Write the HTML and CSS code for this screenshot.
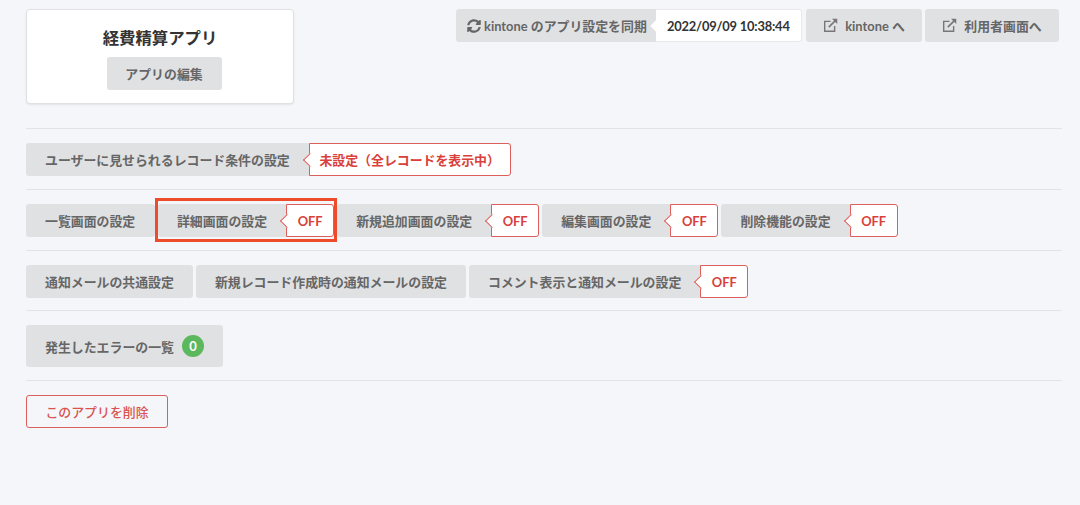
FILE: index.html
```html
<!DOCTYPE html>
<html lang="ja">
<head>
    <meta charset="UTF-8">
    <meta name="viewport" content="width=device-width, initial-scale=1.0">
    <title>経費精算アプリ</title>
    <link rel="stylesheet" href="styles.css">
</head>
<body>
    <div class="container">
        <div class="top">
            <div class="app-card">
                <div class="app-name">経費精算アプリ</div>
                <a class="btn">アプリの編集</a>
            </div>
            <div class="top-actions">
                <a class="btn btn-sync">
                    <svg class="icon" viewBox="0 0 512 512" aria-hidden="true"><path fill="currentColor" d="M370.72 133.28C339.458 104.008 298.888 87.962 255.848 88c-77.458.068-144.328 53.178-162.791 126.85-1.344 5.363-6.122 9.15-11.651 9.15H24.103c-7.498 0-13.194-6.807-11.807-14.176C33.933 94.924 134.813 8 256 8c66.448 0 126.791 26.136 171.315 68.685L463.03 40.97C478.149 25.851 504 36.559 504 57.941V192c0 13.255-10.745 24-24 24H345.941c-21.382 0-32.09-25.851-16.971-40.971l41.75-41.749zM32 296h134.059c21.382 0 32.09 25.851 16.971 40.971l-41.75 41.75c31.262 29.273 71.835 45.319 114.876 45.28 77.418-.07 144.315-53.144 162.787-126.849 1.344-5.363 6.122-9.15 11.651-9.15h57.304c7.498 0 13.194 6.807 11.807 14.176C478.067 417.076 377.187 504 256 504c-66.448 0-126.791-26.136-171.315-68.685L48.97 471.03C33.851 486.149 8 475.441 8 454.059V320c0-13.255 10.745-24 24-24z"/></svg>
                    kintone のアプリ設定を同期
                </a>
                <span class="sync-date">2022/09/09 10:38:44</span>
                <a class="btn btn-link">
                    <svg class="icon icon-link" viewBox="0 0 16 16" aria-hidden="true"><path d="M8 3.6H1.8v10.6h10.6V8.4" fill="none" stroke="currentColor" stroke-width="1.5"/><path d="M6.2 9.8 13.2 2.8" fill="none" stroke="currentColor" stroke-width="1.7"/><path d="M9.6 .8h5.6v5.6z" fill="currentColor"/></svg>
                    kintone へ
                </a>
                <a class="btn btn-link">
                    <svg class="icon icon-link" viewBox="0 0 16 16" aria-hidden="true"><path d="M8 3.6H1.8v10.6h10.6V8.4" fill="none" stroke="currentColor" stroke-width="1.5"/><path d="M6.2 9.8 13.2 2.8" fill="none" stroke="currentColor" stroke-width="1.7"/><path d="M9.6 .8h5.6v5.6z" fill="currentColor"/></svg>
                    利用者画面へ
                </a>
            </div>
        </div>

        <div class="row">
            <div class="item"><a class="btn">ユーザーに見せられるレコード条件の設定</a><span class="tag tag-wide">未設定（全レコードを表示中）</span></div>
        </div>

        <div class="row row-screens">
            <div class="item"><a class="btn">一覧画面の設定</a></div>
            <div class="item item-marked"><a class="btn">詳細画面の設定</a><span class="tag">OFF</span></div>
            <div class="item"><a class="btn">新規追加画面の設定</a><span class="tag">OFF</span></div>
            <div class="item"><a class="btn">編集画面の設定</a><span class="tag">OFF</span></div>
            <div class="item"><a class="btn">削除機能の設定</a><span class="tag">OFF</span></div>
        </div>

        <div class="row row-notify">
            <div class="item"><a class="btn">通知メールの共通設定</a></div>
            <div class="item"><a class="btn">新規レコード作成時の通知メールの設定</a></div>
            <div class="item"><a class="btn">コメント表示と通知メールの設定</a><span class="tag">OFF</span></div>
        </div>

        <div class="row">
            <a class="btn btn-errors">発生したエラーの一覧<span class="count">0</span></a>
        </div>

        <div class="row">
            <a class="btn btn-delete">このアプリを削除</a>
        </div>
    </div>
</body>
</html>
```

FILE: styles.css
```css
* {
    box-sizing: border-box;
}
body {
    margin: 0;
    background-color: #f5f6fa;
    color: #333;
    font-family: "Lato", "Noto Sans CJK JP", sans-serif;
    font-size: 12.9px;
}
.container {
    width: 1036px;
    margin-left: 26px;
    padding-top: 9px;
}
.top {
    display: flex;
    justify-content: space-between;
    align-items: flex-start;
    height: 119px;
}
.app-card {
    width: 268px;
    height: 95px;
    padding-top: 17px;
    background-color: #fff;
    border: 1px solid #dfe1e4;
    border-radius: 4px;
    box-shadow: 0 1px 2px rgba(0, 0, 0, 0.08);
    text-align: center;
}
.app-name {
    height: 30px;
    font-size: 16.4px;
    font-weight: bold;
    line-height: 22px;
    color: #333;
}
.app-card .btn {
    width: 115px;
    margin-left: 8px;
    padding: 0;
}
.top-actions {
    display: flex;
    align-items: stretch;
    margin-right: 3px;
}
.btn {
    display: inline-flex;
    align-items: center;
    justify-content: center;
    height: 33px;
    padding: 0 19px;
    background-color: #e0e1e3;
    border-radius: 3px;
    color: #666;
    font-weight: bold;
    white-space: nowrap;
}
.icon {
    width: 14px;
    height: 14px;
    flex: none;
}
.icon-link {
    width: 15px;
    height: 15px;
    color: #777;
}
.btn-sync {
    gap: 3px;
    justify-content: flex-start;
    width: 200px;
    padding: 0 0 0 11px;
    border-radius: 3px 0 0 3px;
}
.sync-date {
    position: relative;
    display: flex;
    align-items: center;
    width: 146px;
    padding-left: 11px;
    background-color: #fff;
    border: 1px solid #e8e9eb;
    border-left: none;
    border-radius: 0 3px 3px 0;
    color: #333;
    font-weight: bold;
    letter-spacing: -0.2px;
    white-space: nowrap;
}
.sync-date::before {
    content: "";
    position: absolute;
    left: -4px;
    top: 12px;
    width: 8px;
    height: 8px;
    background-color: #fff;
    transform: rotate(45deg);
}
.btn-link {
    gap: 7px;
    margin-left: 4px;
    padding: 0;
    width: 116px;
}
.btn-link + .btn-link {
    margin-left: 3px;
    width: 134px;
}
.row {
    display: flex;
    align-items: flex-start;
    gap: 3px;
    padding: 14px 0 13px;
    border-top: 1px solid #e2e3e6;
}
.row-notify {
    padding-bottom: 12px;
}
.row-screens .item:first-child .btn {
    padding-right: 19.7px;
}
.item {
    position: relative;
    display: flex;
}
.item-marked::after {
    content: "";
    position: absolute;
    inset: -6px -3px -5px -3px;
    border: 3px solid #ee4b2b;
    pointer-events: none;
}
.tag {
    position: relative;
    display: flex;
    align-items: center;
    justify-content: center;
    width: 48px;
    height: 33px;
    background-color: #fff;
    border: 1px solid #dd5f5b;
    border-radius: 0 3px 3px 0;
    color: #d9403a;
    font-weight: bold;
}
.tag::before {
    content: "";
    position: absolute;
    left: -5px;
    top: 11px;
    width: 9px;
    height: 9px;
    background-color: #fff;
    border-left: 1px solid #dd5f5b;
    border-bottom: 1px solid #dd5f5b;
    transform: rotate(45deg);
}
.item .btn:has(+ .tag) {
    border-radius: 3px 0 0 3px;
}
.tag-wide {
    width: 202px;
}
.btn-errors {
    height: 42px;
    width: 197px;
    gap: 8px;
    padding: 0;
}
.count {
    display: flex;
    align-items: center;
    justify-content: center;
    width: 22px;
    height: 22px;
    background-color: #5cb85c;
    border-radius: 50%;
    color: #fff;
    font-size: 13px;
}
.btn-delete {
    width: 142px;
    padding: 0;
    background-color: transparent;
    border: 1px solid #dd5f5b;
    color: #d9534f;
    font-weight: 500;
}
```
